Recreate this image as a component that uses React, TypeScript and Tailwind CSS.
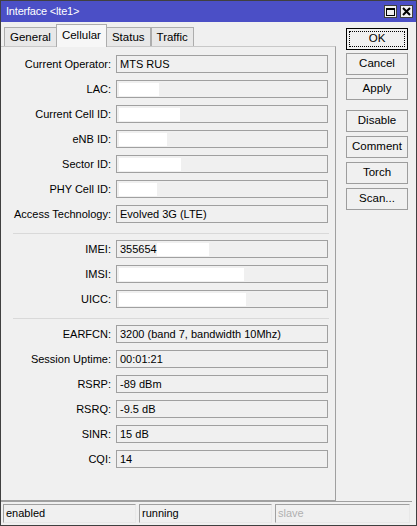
import React from "react";

type Field = { label: string; value?: string; redact?: number };

const groups: Field[][] = [
  [
    { label: "Current Operator", value: "MTS RUS" },
    { label: "LAC", redact: 40 },
    { label: "Current Cell ID", redact: 61 },
    { label: "eNB ID", redact: 48 },
    { label: "Sector ID", redact: 62 },
    { label: "PHY Cell ID", redact: 38 },
    { label: "Access Technology", value: "Evolved 3G (LTE)" },
  ],
  [
    { label: "IMEI", value: "355654", redact: 52 },
    { label: "IMSI", redact: 125 },
    { label: "UICC", redact: 127 },
  ],
  [
    { label: "EARFCN", value: "3200 (band 7, bandwidth 10Mhz)" },
    { label: "Session Uptime", value: "00:01:21" },
    { label: "RSRP", value: "-89 dBm" },
    { label: "RSRQ", value: "-9.5 dB" },
    { label: "SINR", value: "15 dB" },
    { label: "CQI", value: "14" },
  ],
];

const tabs = ["General", "Cellular", "Status", "Traffic"];

function Row({ f }: { f: Field }) {
  return (
    <div className="flex items-center h-[18px]">
      <div className="w-[112px] text-right pr-[5px]">{f.label}:</div>
      <div className="w-[212px] h-[18px] border border-[#a0a0a0] flex items-center pl-[2px] overflow-hidden">
        {f.value && <span className="pl-[1px] whitespace-nowrap">{f.value}</span>}
        {f.redact && <div className="h-[13px] bg-white" style={{ width: f.redact }} />}
      </div>
    </div>
  );
}

function Button({ label, focused }: { label: string; focused?: boolean }) {
  return (
    <div
      className={`h-[22px] w-[62px] flex items-center justify-center bg-[#f0f0f0] ${
        focused ? "border border-black p-[2px]" : "border border-[#9d9d9d]"
      }`}
    >
      {focused ? (
        <div className="w-full h-full border border-dotted border-black flex items-center justify-center">{label}</div>
      ) : (
        label
      )}
    </div>
  );
}

export default function App() {
  return (
    <div
      className="w-[417px] h-[526px] bg-[#f0f0f0] border border-[#404040] flex flex-col text-[11px] text-black"
      style={{ fontFamily: '"Liberation Sans", Arial, sans-serif' }}
    >
      {/* title bar */}
      <div className="h-[21px] bg-[#4b4fc6] flex items-center justify-between pl-[5px] pr-[3px] shrink-0">
        <span className="text-white tracking-[-0.2px]">Interface &lt;lte1&gt;</span>
        <div className="flex gap-[3px] items-center">
          <div className="w-[13px] h-[13px] bg-[#f0f0f0] border border-[#404040] flex items-center justify-center">
            <div className="w-[9px] h-[8px] border border-black border-t-2" />
          </div>
          <div className="w-[13px] h-[13px] bg-[#f0f0f0] border border-[#404040] flex items-center justify-center">
            <svg width="9" height="9" viewBox="0 0 9 9">
              <path d="M1 1L8 8M8 1L1 8" stroke="black" strokeWidth="2" />
            </svg>
          </div>
        </div>
      </div>

      <div className="flex flex-1 min-h-0">
        {/* tabbed panel */}
        <div className="w-[335px] flex flex-col pt-[2px]">
          <div className="flex items-end pl-[3px] h-[23px] text-[11.5px]">
            {tabs.map((t) => {
              const active = t === "Cellular";
              return (
                <div
                  key={t}
                  className={`border border-[#adadad] border-b-0 px-[5px] flex items-center ${
                    active ? "h-[23px] bg-[#f7f7f7] -mx-[1px] relative z-10" : "h-[20px] bg-[#e8e8e8]"
                  }`}
                >
                  {t}
                </div>
              );
            })}
          </div>
          <div className="flex-1 border-r border-b border-[#a0a0a0] -mt-[1px] border-t border-t-[#c8c8c8] pt-[8px] pl-[3px]">
            {groups.map((g, gi) => (
              <div key={gi}>
                {gi > 0 && <div className="h-px bg-[#d9d9d9] ml-[9px] mr-[6px] mt-[10px] mb-[6px]" />}
                <div className="flex flex-col gap-[7px]">
                  {g.map((f) => (
                    <Row key={f.label} f={f} />
                  ))}
                </div>
              </div>
            ))}
          </div>
        </div>

        {/* action buttons */}
        <div className="flex-1 flex flex-col pl-[10px] pt-[6px] text-[11.5px]">
          <div className="flex flex-col gap-[3px]">
            <Button label="OK" focused />
            <Button label="Cancel" />
            <Button label="Apply" />
          </div>
          <div className="flex flex-col gap-[4px] mt-[10px]">
            <Button label="Disable" />
            <Button label="Comment" />
            <Button label="Torch" />
            <Button label="Scan..." />
          </div>
        </div>
      </div>

      {/* status bar */}
      <div className="h-[24px] border-t border-[#a0a0a0] flex gap-[3px] px-[2px] pt-[2px] pb-[2px] mr-[4px]">
        <div className="w-[133px] border border-[#a0a0a0] border-r-[#e8e8e8] border-b-[#e8e8e8] pl-[2px] flex items-center">enabled</div>
        <div className="w-[133px] border border-[#a0a0a0] border-r-[#e8e8e8] border-b-[#e8e8e8] pl-[2px] flex items-center">running</div>
        <div className="flex-1 border border-[#a0a0a0] border-r-[#e8e8e8] border-b-[#e8e8e8] pl-[2px] flex items-center text-[#b0b0b0]">slave</div>
      </div>
    </div>
  );
}
